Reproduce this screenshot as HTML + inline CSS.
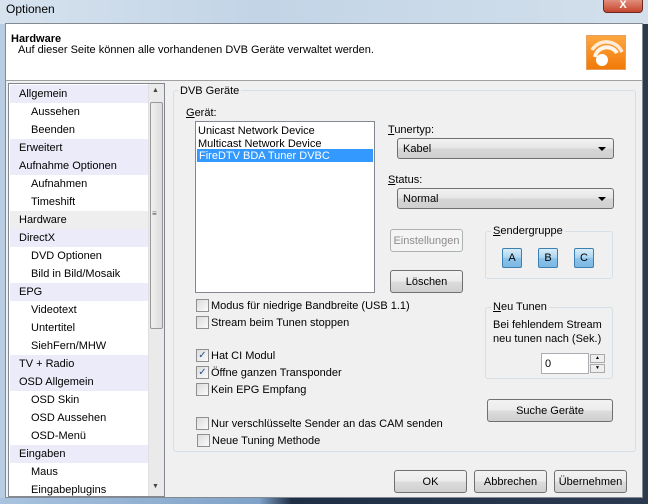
<!DOCTYPE html>
<html><head><meta charset="utf-8"><style>
*{box-sizing:border-box}
body{margin:0;width:648px;height:504px;overflow:hidden;background:#c9d9ea;font-family:"Liberation Sans",sans-serif;font-size:11px;color:#000;position:relative}
.a{position:absolute}
.btn{position:absolute;border:1px solid #707070;border-radius:3px;background:linear-gradient(#f2f2f2 0%,#ebebeb 50%,#dddddd 51%,#cfcfcf 100%);text-align:center;font-size:11px;padding-top:1px}
.cb{position:absolute;width:13px;height:13px;border:1px solid #8f8f8f;background:linear-gradient(135deg,#dcdcdc,#fbfbfb)}
.lbl{position:absolute;font-size:11px;white-space:nowrap;margin-top:2px}
.lg{margin-top:1px}
.it{position:absolute;left:1px;width:139px;height:18px;line-height:19px;white-space:nowrap;font-size:11px}
.g{background:#ecebf9;padding-left:9px}
.c{padding-left:21px}
.combo{position:absolute;border:1px solid #707070;border-radius:3px;background:linear-gradient(#f2f2f2,#e5e5e5 50%,#d6d6d6 51%,#d0d0d0);padding-left:2px;line-height:20px}
.combo:after{content:"";position:absolute;right:7px;top:8px;border:4px solid transparent;border-top:4px solid #000;border-bottom:0}
.sg{position:absolute;width:20px;height:20px;border:1px solid #3c7fb1;border-radius:2px;background:linear-gradient(#d9ecf8,#a8d3f0 50%,#8ec4ea 51%,#7ab8e3);text-align:center;line-height:19px}
</style></head><body>
<div class="a" style="left:0;top:0;width:648px;height:24px;background:linear-gradient(90deg,#d6e2ee,#c2d4e6 40%,#d3e0ec)"></div>
<div class="a" style="left:6px;top:2px;font-size:12px">Optionen</div>
<div class="a" style="left:603px;top:-3px;width:40px;height:16px;border:1px solid #6a2a22;border-radius:0 0 4px 4px;background:linear-gradient(#e59a88,#c6452d);color:#fff;text-align:center;font-weight:bold;line-height:14px">X</div>
<div class="a" style="left:5px;top:23px;width:638px;height:475px;background:#f0f0f0;border:1px solid #838a92"></div>
<div class="a" style="left:5px;top:23px;width:638px;height:58px;background:#fff;border:1px solid #838a92;border-bottom:1px solid #a0a0a0"></div>
<div class="a" style="left:11px;top:33px;font-weight:bold;font-size:11px">Hardware</div>
<div class="a" style="left:18px;top:44px;font-size:11px">Auf dieser Seite können alle vorhandenen DVB Geräte verwaltet werden.</div>
<div class="a" style="left:586px;top:35px;width:40px;height:35px;border:1px solid #e8a060;background:linear-gradient(#ffa640,#f07a08);overflow:hidden">
<svg width="40" height="35" viewBox="0 0 40 35"><circle cx="15" cy="24" r="6" fill="#fff"/><path d="M8 21a12 12 0 0 1 22 -4" stroke="#fff" stroke-width="4" fill="none" opacity=".9"/><path d="M5 14a17 17 0 0 1 30 2" stroke="#fff" stroke-width="3.5" fill="none" opacity=".8"/></svg></div>
<!-- tree -->
<div class="a" style="left:8px;top:83px;width:157px;height:414px;background:#fff;border:1px solid #828790">
<div class="it g" style="top:1px">Allgemein</div>
<div class="it c" style="top:19px">Aussehen</div>
<div class="it c" style="top:37px">Beenden</div>
<div class="it g" style="top:55px">Erweitert</div>
<div class="it g" style="top:73px">Aufnahme Optionen</div>
<div class="it c" style="top:91px">Aufnahmen</div>
<div class="it c" style="top:109px">Timeshift</div>
<div class="it g" style="top:127px;background:#eeeeee">Hardware</div>
<div class="it g" style="top:145px">DirectX</div>
<div class="it c" style="top:163px">DVD Optionen</div>
<div class="it c" style="top:181px">Bild in Bild/Mosaik</div>
<div class="it g" style="top:199px">EPG</div>
<div class="it c" style="top:217px">Videotext</div>
<div class="it c" style="top:235px">Untertitel</div>
<div class="it c" style="top:253px">SiehFern/MHW</div>
<div class="it g" style="top:271px">TV + Radio</div>
<div class="it g" style="top:289px">OSD Allgemein</div>
<div class="it c" style="top:307px">OSD Skin</div>
<div class="it c" style="top:325px">OSD Aussehen</div>
<div class="it c" style="top:343px">OSD-Menü</div>
<div class="it g" style="top:361px">Eingaben</div>
<div class="it c" style="top:379px">Maus</div>
<div class="it c" style="top:397px">Eingabeplugins</div>
<div class="a" style="left:139px;top:0;width:16px;height:412px;background:#eaeaea;border-left:1px solid #e0e0e0"></div>
<div class="a" style="left:141px;top:18px;width:13px;height:227px;border:1px solid #999;border-radius:2px;background:linear-gradient(90deg,#f0f0f0,#dcdcdc)"></div>
<div class="a" style="left:143px;top:125px;font-size:8px;color:#555">≡</div>
<div class="a" style="left:143px;top:3px;font-size:7px;color:#444">▲</div>
<div class="a" style="left:143px;top:399px;font-size:7px;color:#444">▼</div>
</div>
<!-- group -->
<div class="a" style="left:173px;top:90px;width:463px;height:362px;border:1px solid #d5dfe5;border-radius:3px"></div>
<div class="a lg" style="left:178px;top:84px;background:#f0f0f0;padding:0 2px">DVB Geräte</div>
<div class="lbl" style="left:186px;top:105px"><u>G</u>erät:</div>
<div class="a" style="left:195px;top:121px;width:180px;height:172px;background:#fff;border:1px solid #828790">
<div class="lbl" style="left:2px;top:1px">Unicast Network Device</div>
<div class="lbl" style="left:2px;top:14px">Multicast Network Device</div>
<div class="a" style="left:1px;top:27px;width:176px;height:13px;background:#3399ff;color:#fff;padding-left:2px;line-height:14px">FireDTV BDA Tuner DVBC</div>
</div>
<div class="lbl" style="left:388px;top:122px"><u>T</u>unertyp:</div>
<div class="combo" style="left:397px;top:138px;width:217px;height:21px">&nbsp;Kabel</div>
<div class="lbl" style="left:388px;top:172px"><u>S</u>tatus:</div>
<div class="combo" style="left:397px;top:188px;width:217px;height:21px">&nbsp;Normal</div>
<div class="btn" style="left:390px;top:229px;width:73px;height:23px;line-height:21px;color:#8d8d8d;border-color:#adb2b5;background:#f4f4f4">Einstellungen</div>
<div class="btn" style="left:390px;top:270px;width:73px;height:23px;line-height:21px">Löschen</div>
<div class="a" style="left:485px;top:231px;width:128px;height:48px;border:1px solid #d5dfe5;border-radius:3px"></div>
<div class="a lg" style="left:491px;top:224px;background:#f0f0f0;padding:0 2px"><u>S</u>endergruppe</div>
<div class="sg" style="left:502px;top:248px">A</div>
<div class="sg" style="left:538px;top:248px">B</div>
<div class="sg" style="left:574px;top:248px">C</div>
<div class="cb" style="left:196px;top:299px"></div><div class="lbl" style="left:211px;top:298px">Modus für niedrige Bandbreite (USB 1.1)</div>
<div class="cb" style="left:196px;top:316px"></div><div class="lbl" style="left:211px;top:315px">Stream beim Tunen stoppen</div>
<div class="cb" style="left:196px;top:349px;color:#2a4e8a;font-size:10px;line-height:11px;text-align:center">✓</div><div class="lbl" style="left:211px;top:348px">Hat CI Modul</div>
<div class="cb" style="left:196px;top:366px;color:#2a4e8a;font-size:10px;line-height:11px;text-align:center">✓</div><div class="lbl" style="left:211px;top:365px">Öffne ganzen Transponder</div>
<div class="cb" style="left:196px;top:383px"></div><div class="lbl" style="left:211px;top:382px">Kein EPG Empfang</div>
<div class="cb" style="left:196px;top:417px"></div><div class="lbl" style="left:211px;top:416px">Nur verschlüsselte Sender an das CAM senden</div>
<div class="cb" style="left:197px;top:434px"></div><div class="lbl" style="left:212px;top:433px">Neue Tuning Methode</div>
<div class="a" style="left:485px;top:307px;width:128px;height:72px;border:1px solid #d5dfe5;border-radius:3px"></div>
<div class="a lg" style="left:491px;top:300px;background:#f0f0f0;padding:0 2px"><u>N</u>eu Tunen</div>
<div class="lbl" style="left:493px;top:316px;line-height:14px">Bei fehlendem Stream<br>neu tunen nach (Sek.)</div>
<div class="a" style="left:541px;top:353px;width:48px;height:21px;background:#fff;border:1px solid #abadb3;padding:4px 0 0 3px">0</div>
<div class="a" style="left:590px;top:354px;width:15px;height:9px;border:1px solid #aaa;background:#eee;font-size:5px;text-align:center;line-height:7px">▲</div>
<div class="a" style="left:590px;top:364px;width:15px;height:9px;border:1px solid #aaa;background:#eee;font-size:5px;text-align:center;line-height:7px">▼</div>
<div class="btn" style="left:487px;top:399px;width:126px;height:23px;line-height:21px">Suche Geräte</div>
<div class="btn" style="left:394px;top:470px;width:73px;height:23px;line-height:21px">OK</div>
<div class="btn" style="left:474px;top:470px;width:73px;height:23px;line-height:21px">Abbrechen</div>
<div class="btn" style="left:554px;top:470px;width:73px;height:23px;line-height:21px">Übernehmen</div>
<div class="a" style="left:0;top:498px;width:648px;height:6px;background:linear-gradient(90deg,#a9c3df,#7fa2c8 40%,#1f2f45 45%,#2b3a50)"></div>
<div class="a" style="left:643px;top:24px;width:5px;height:480px;background:#2c3a4c"></div>
<div class="a" style="left:0;top:24px;width:5px;height:474px;background:#b8cde2"></div>
</body></html>
